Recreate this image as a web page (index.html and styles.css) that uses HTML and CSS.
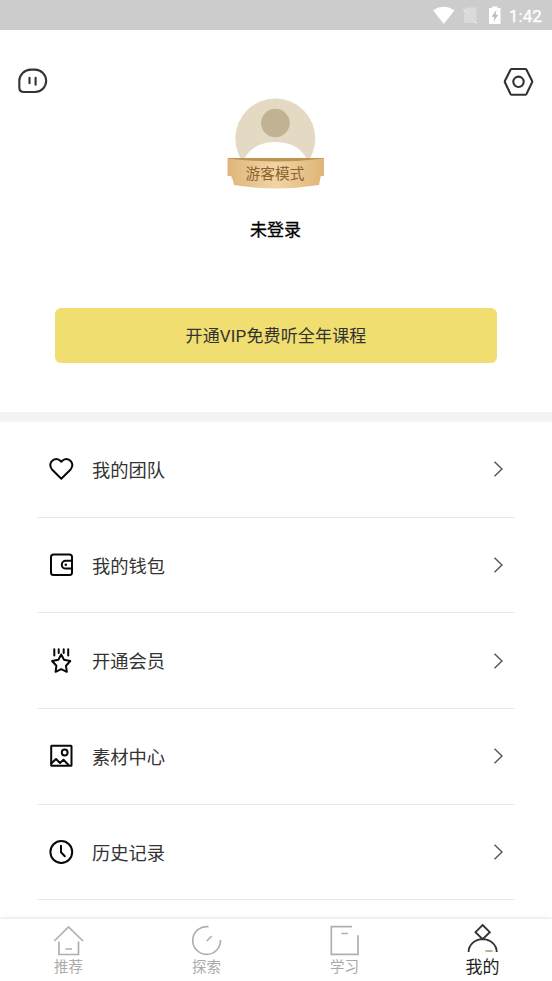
FILE: index.html
```html
<!DOCTYPE html>
<html lang="zh-CN">
<head>
<meta charset="utf-8">
<title>我的</title>
<link rel="stylesheet" href="styles.css">
</head>
<body>
<div class="screen">
  <header class="status">
    <svg width="76" height="30" viewBox="428 0 76 30">
      <path d="M432 10.200Q442.500 3.500 453.500 10.200L442.800 24Z" fill="#fff"/>
      <path d="M466.500 7.500H475.500V21L463 9.500ZM463 11.500L474.500 23H463Z" fill="#dadada"/>
      <path d="M462.500 9L476 23.500" stroke="#e4e4e4" stroke-width="1.300"/>
      <path d="M488 8H491V6.500H496.500V8H499.500V24H488Z" fill="#fff"/>
      <path d="M495.500 10L490.500 16.800H493.500L492.300 21.500L497.500 14.800H494.500Z" fill="#bbb"/>
    </svg>
    <span class="clock">1:42</span>
  </header>
  <section class="profile">
    <div class="tools">
      <svg width="32" height="28" viewBox="17 67 32 28" class="dark">
        <path d="M31 69.600H35A11.200 11.200 0 0 1 35 92H24Q19.300 92 19.300 87.500V81A11.700 11.400 0 0 1 31 69.600Z"/>
        <path d="M29.500 77.800V83.300M35.600 77.800V84.800"/>
      </svg>
      <svg width="32" height="32" viewBox="502 66 32 32" class="dark">
        <path d="M511.800 69H525.200Q526 69 526.500 69.800L532 80.800Q532.400 81.700 532 82.500L526.500 94Q526 94.800 525.200 94.800H511.800Q511 94.800 510.500 94L505 82.500Q504.600 81.700 505 80.800L510.500 69.800Q511 69 511.800 69Z"/>
        <circle cx="518.500" cy="81.800" r="5.200"/>
      </svg>
    </div>
    <div class="avatar">
      <svg width="98" height="92" viewBox="227 98 98 92">
        <defs>
          <linearGradient id="gold"><stop offset="0" stop-color="#dfb67a"/><stop offset=".5" stop-color="#f0d4a5"/><stop offset="1" stop-color="#dfb577"/></linearGradient>
          <clipPath id="bust"><path d="M227 98H325V160H227Z"/></clipPath>
        </defs>
        <g clip-path="url(#bust)">
          <circle cx="275.300" cy="138.500" r="40" fill="#e4dac4"/>
          <path d="M242 164Q250 142 275.500 142T309 164Z" fill="#fff"/>
          <circle cx="275.400" cy="123" r="14.300" fill="#c0b292"/>
        </g>
        <path d="M227.500 158H324V176H319.500V179H231.500V176H227.500Z" fill="#e3b97b"/>
        <path d="M228 158H324L322 161.500Q276 164 230 161.500Z" fill="#bd934f"/>
        <path d="M228 158.500Q276 164.500 324 158.500V175H321L319 185Q276 192 234 185L231.500 175H228Z" fill="url(#gold)"/>
      </svg>
      <span class="ribbon">游客模式</span>
    </div>
    <h1 class="name">未登录</h1>
    <button class="vip">开通VIP免费听全年课程</button>
  </section>
  <main class="menu">
    <a class="row">
      <svg class="icon" width="26" height="26" viewBox="48 456.500 26 26"><path d="M61.300 479.300L52 470Q48.800 465.800 51.500 462Q55.500 457.700 60 461L61.300 462.300L62.600 461Q67.200 457.700 71.100 462Q73.800 465.800 70.600 470Z"/></svg>
      <span class="label">我的团队</span><svg class="chevron" width="12" height="18" viewBox="0 0 12 18"><path d="M1.500 1.800L9 9L1.500 16.200"/></svg>
    </a>
    <a class="row">
      <svg class="icon" width="26" height="26" viewBox="48 552 26 26"><rect x="51" y="554.500" width="21" height="20.500" rx="2.500"/><path d="M72 560.800H65.700A3.900 3.900 0 0 0 65.700 568.600H72"/><circle cx="65.800" cy="564.700" r="1.300" class="dot"/></svg>
      <span class="label">我的钱包</span><svg class="chevron" width="12" height="18" viewBox="0 0 12 18"><path d="M1.500 1.800L9 9L1.500 16.200"/></svg>
    </a>
    <a class="row">
      <svg class="icon" width="26" height="26" viewBox="48 647.500 26 26"><path d="M61.200 654L64 659.200L70.300 660.500L66 665.200L66.800 671.300L61.200 668.700L55.600 671.300L56.400 665.200L52.100 660.500L58.400 659.200Z"/><path d="M54.300 648.800V655M58.700 648.800V652.500M63.700 648.800V652.500M68.200 648.800V655"/></svg>
      <span class="label">开通会员</span><svg class="chevron" width="12" height="18" viewBox="0 0 12 18"><path d="M1.500 1.800L9 9L1.500 16.200"/></svg>
    </a>
    <a class="row">
      <svg class="icon" width="26" height="26" viewBox="48 743 26 26"><rect x="51.200" y="745.800" width="20.300" height="20" rx=".5"/><circle cx="64.700" cy="752.500" r="2.900"/><path d="M51.500 763.300L56 759L60 763L63.500 759.800L68.500 765"/></svg>
      <span class="label">素材中心</span><svg class="chevron" width="12" height="18" viewBox="0 0 12 18"><path d="M1.500 1.800L9 9L1.500 16.200"/></svg>
    </a>
    <a class="row">
      <svg class="icon" width="26" height="26" viewBox="48 838.500 26 26"><circle cx="61.300" cy="851.500" r="10.900"/><path d="M61 845.300V851.800L64.800 855.800"/></svg>
      <span class="label">历史记录</span><svg class="chevron" width="12" height="18" viewBox="0 0 12 18"><path d="M1.500 1.800L9 9L1.500 16.200"/></svg>
    </a>
  </main>
  <nav class="tabs">
    <a class="tab"><svg width="34" height="34" viewBox="52 923 34 34"><path d="M54.300 941L68.500 927L83 941M59 941.500V954.500H78.500V941.500M65.300 949H72"/></svg><span>推荐</span></a>
    <a class="tab"><svg width="34" height="34" viewBox="190 923 34 34"><path d="M208.500 926.700A13.900 13.900 0 1 0 220.500 940M206.800 941L211.800 936"/></svg><span>探索</span></a>
    <a class="tab"><svg width="34" height="34" viewBox="328 923 34 34"><path d="M352 926.700H331.300V954.300H358V935.300M341.300 933.500H348"/></svg><span>学习</span></a>
    <a class="tab active"><svg width="34" height="34" viewBox="466 923 34 34"><path d="M482.600 925L489.800 932.200L482.600 939.200L475.500 932.200ZM468.600 952A14 12.800 0 0 1 496.700 952"/><path class="accent" d="M485.500 951H492.500"/></svg><span>我的</span></a>
  </nav>
</div>
</body>
</html>
```
FILE: styles.css
```css
* { box-sizing: border-box; }
body {
  margin: 0;
  background: #fff;
  color: #333;
  font-family: Roboto, "Noto Sans CJK SC", sans-serif;
}
svg { display: block; flex: none; }
.screen {
  width: 552px;
  height: 981px;
  display: flex;
  flex-direction: column;
  overflow: hidden;
}
.status {
  flex: none;
  height: 30px;
  padding-right: 10px;
  display: flex;
  justify-content: flex-end;
  align-items: center;
  gap: 4px;
  background: #ccc;
  color: #fff;
}
.clock { font-size: 17px; line-height: 20px; padding-top: 2px; letter-spacing: .1px; -webkit-text-stroke: .3px #fff; }
.profile {
  flex: none;
  height: 392px;
  padding-top: 36px;
  display: flex;
  flex-direction: column;
  align-items: center;
  border-bottom: 10px solid #f4f4f4;
}
.tools {
  width: 100%;
  height: 32px;
  padding: 0 18px 0 17px;
  display: flex;
  justify-content: space-between;
}
.tools svg:first-child { margin-top: 1px; }
.dark { fill: none; stroke: #333; stroke-width: 2.100; stroke-linecap: round; }
.avatar { position: relative; width: 98px; height: 92px; }
.ribbon {
  position: absolute;
  left: 0;
  right: 2px;
  top: 65px;
  line-height: 22px;
  text-align: center;
  font-size: 14.700px;
  color: #8d622b;
}
.name {
  margin: 27px 0 0;
  padding-right: 1px;
  font-size: 17px;
  font-weight: 400;
  line-height: 26px;
  color: #000;
  -webkit-text-stroke: .3px #000;
}
.vip {
  width: 442px;
  height: 55px;
  margin-top: 65px;
  padding: 2px 0 0;
  border: 0;
  border-radius: 6px;
  background: #f0de70;
  color: #333;
  font: 400 17px/53px Roboto, "Noto Sans CJK SC", sans-serif;
  letter-spacing: .15px;
}
.menu { flex: 1; min-height: 0; padding: 0 37px; overflow: hidden; }
.row {
  height: 95.700px;
  padding: 0 10px 0 11px;
  display: flex;
  align-items: center;
  border-bottom: 1px solid #e8e8e8;
}
.icon { fill: none; stroke: #080808; stroke-width: 2; stroke-linejoin: round; stroke-linecap: round; }
.dot { fill: #080808; stroke: none; }
.label { flex: 1; margin-left: 18px; padding-top: 3px; font-size: 18.300px; line-height: 28px; }
.chevron { fill: none; stroke: #555; stroke-width: 1.400; }
.tabs {
  flex: none;
  height: 62px;
  display: flex;
  background: #fff;
  box-shadow: 0 0 4px rgba(0, 0, 0, .18);
}
.tab {
  flex: 1;
  padding: 4px 1px 0 0;
  display: flex;
  flex-direction: column;
  align-items: center;
  font-size: 14.500px;
  line-height: 22px;
  color: #aaa;
}
.tab svg { fill: none; stroke: #b0b0b0; stroke-width: 1.700; }
.active { color: #222; font-size: 17px; line-height: 20px; }
.tab.active svg { stroke: #333; stroke-width: 1.900; }
.active .accent { stroke: #b9ad8c; }
```
